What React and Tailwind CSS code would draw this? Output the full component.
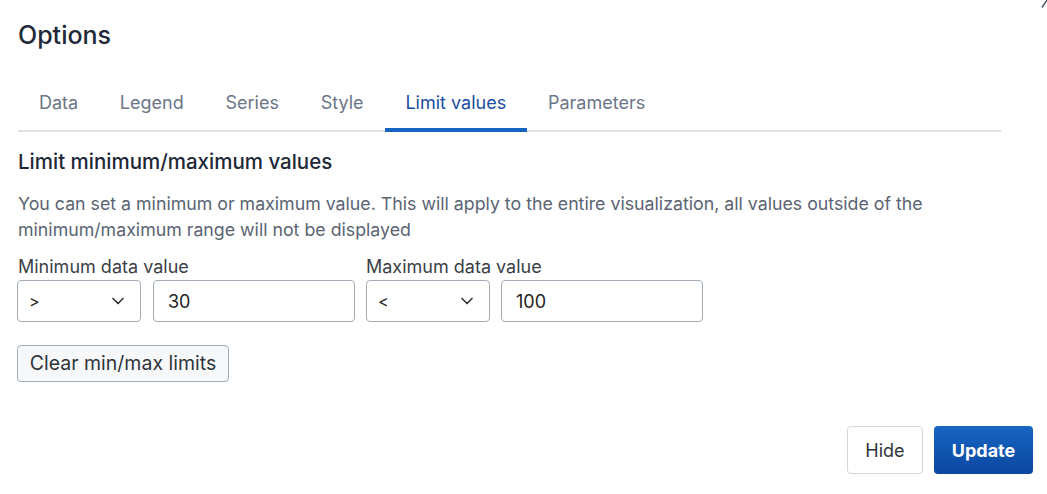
import { ChevronDown } from "lucide-react";

const tabs = ["Data", "Legend", "Series", "Style", "Limit values", "Parameters"];

const SelectBox = ({ value }) => (
  <div className="flex items-center justify-between w-[124px] h-[42px] border border-[#a3adb8] rounded-[4px] pl-[11px] pr-[12px] text-[16px] text-[#222]">
    <span>{value}</span>
    <ChevronDown size={20} strokeWidth={2} className="text-[#333]" />
  </div>
);

const InputBox = ({ value }) => (
  <div className="flex items-center w-[202px] h-[42px] border border-[#a3adb8] rounded-[4px] pl-[14px] text-[18px] text-[#222]">
    {value}
  </div>
);

const App = () => {
  const active = "Limit values";
  return (
    <div className="relative w-[1047px] h-[494px] bg-white font-['Inter',sans-serif] overflow-hidden">
      <svg className="absolute right-0 top-0" width="6" height="8" viewBox="0 0 6 8">
        <line x1="1" y1="7.5" x2="6" y2="0" stroke="#4a5568" strokeWidth="1.4" />
      </svg>
      <div className="pl-[18px] pr-[14px] pt-[18px]">
        <h1 className="text-[25px] leading-[34px] font-medium text-[#1f2937]">Options</h1>
        <div className="flex w-[983px] mt-[25px] border-b-2 border-[#dde1e6]">
          {tabs.map((t) => (
            <div
              key={t}
              className={
                t === active
                  ? "px-[20.9px] pt-[14px] pb-[13px] -mb-[2px] text-[18px] leading-[24px] border-b-4 border-[#1565c0] text-[#1a4fa0]"
                  : "px-[20.9px] pt-[14px] pb-[13px] -mb-[2px] text-[18px] leading-[24px] border-b-4 border-transparent text-[#6b7687]"
              }
            >
              {t}
            </div>
          ))}
        </div>
        <h2 className="mt-[16px] text-[20.5px] leading-[28px] font-medium text-[#1f2937]">
          Limit minimum/maximum values
        </h2>
        <p className="mt-[15px] w-[940px] text-[17.75px] leading-[26px] text-[#5a6473]">
          You can set a minimum or maximum value. This will apply to the entire visualization, all values outside of the minimum/maximum range will not be displayed
        </p>
        <div className="flex gap-[11px] mt-[12px] -ml-[1px]">
          <div>
            <div className="text-[18px] leading-[24px] text-[#3a3f47] pl-[1px]">Minimum data value</div>
            <div className="flex gap-[12px] mt-[1px]">
              <SelectBox value=">" />
              <InputBox value="30" />
            </div>
          </div>
          <div>
            <div className="text-[18px] leading-[24px] text-[#3a3f47]">Maximum data value</div>
            <div className="flex gap-[11px] mt-[1px]">
              <SelectBox value="<" />
              <InputBox value="100" />
            </div>
          </div>
        </div>
        <button className="mt-[23px] -ml-[1px] h-[37px] w-[212px] border border-[#a3adb8] rounded-[4px] bg-[#f7f8fa] text-[19.5px] text-[#2f343b]">
          Clear min/max limits
        </button>
        <div className="flex justify-end gap-[11px] mt-[44px]">
          <button className="w-[76px] h-[48px] border border-[#d4d6d9] rounded-[4px] bg-white text-[18px] text-[#2f343b]">
            Hide
          </button>
          <button className="w-[99px] h-[48px] rounded-[4px] bg-gradient-to-b from-[#1766c2] to-[#0b46a0] font-bold text-[18px] text-white">
            Update
          </button>
        </div>
      </div>
    </div>
  );
};

export default App;
